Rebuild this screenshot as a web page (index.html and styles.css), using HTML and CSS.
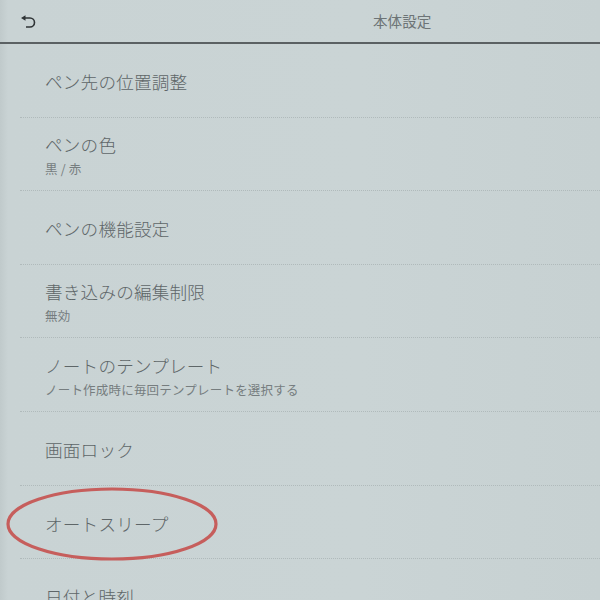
FILE: index.html
```html
<!DOCTYPE html>
<html lang="ja">
<head>
<meta charset="utf-8">
<link rel="stylesheet" href="styles.css">
</head>
<body>
<div class="screen">
  <header class="topbar">
    <svg class="back" width="16" height="14" viewBox="0 0 16 14">
      <path d="M4 3 H10 A4.5 4.5 0 0 1 10 12 H6" fill="none" stroke="#2f3436" stroke-width="1.6"/>
      <path d="M1 3 L5.5 0.3 L5.5 5.7 Z" fill="#2f3436"/>
    </svg>
    <div class="title">本体設定</div>
  </header>
  <ul class="list">
    <li class="row"><div class="main">ペン先の位置調整</div></li>
    <li class="row"><div class="main">ペンの色</div><div class="sub">黒 / 赤</div></li>
    <li class="row"><div class="main">ペンの機能設定</div></li>
    <li class="row"><div class="main">書き込みの編集制限</div><div class="sub">無効</div></li>
    <li class="row"><div class="main">ノートのテンプレート</div><div class="sub">ノート作成時に毎回テンプレートを選択する</div></li>
    <li class="row"><div class="main">画面ロック</div></li>
    <li class="row"><div class="main">オートスリープ</div></li>
    <li class="row"><div class="main">日付と時刻</div></li>
  </ul>
  <svg class="circle" width="216" height="80" viewBox="0 0 216 80">
    <ellipse cx="108" cy="40" rx="104" ry="35" fill="none" stroke="#c65e5c" stroke-width="3.2"/>
  </svg>
</div>
</body>
</html>
```
FILE: styles.css
```css
html, body {
  margin: 0;
  padding: 0;
  background: #c9d3d4;
}
.screen {
  position: relative;
  width: 600px;
  height: 600px;
  overflow: hidden;
  background: linear-gradient(90deg, #c0cacb 0px, #c9d3d4 8px, #cad4d5 60%, #c7d1d2 100%);
  font-family: "Noto Sans CJK JP", "Noto Sans", sans-serif;
  color: #5e6668;
}
.topbar {
  height: 42px;
  border-bottom: 2px solid #5b6163;
  display: flex;
  align-items: center;
}
.back {
  margin-left: 20px;
  margin-top: 2px;
}
.title {
  margin-left: 337px;
  font-size: 14.6px;
  color: #6d7476;
  margin-top: -2px;
}
.list {
  list-style: none;
  margin: 0;
  padding: 0;
}
.row {
  box-sizing: border-box;
  height: 73.6px;
  margin-left: 20px;
  padding-left: 25px;
  padding-top: 4px;
  border-bottom: 1px dotted #b0babb;
  display: flex;
  flex-direction: column;
  justify-content: center;
}
.main {
  font-size: 17.6px;
  line-height: 26px;
  font-weight: 300;
  color: #5e6668;
  letter-spacing: 0.2px;
}
.sub {
  font-size: 12.5px;
  line-height: 22px;
  color: #767d7f;
  letter-spacing: 0.2px;
}
.circle {
  position: absolute;
  left: 4px;
  top: 484px;
}
```
